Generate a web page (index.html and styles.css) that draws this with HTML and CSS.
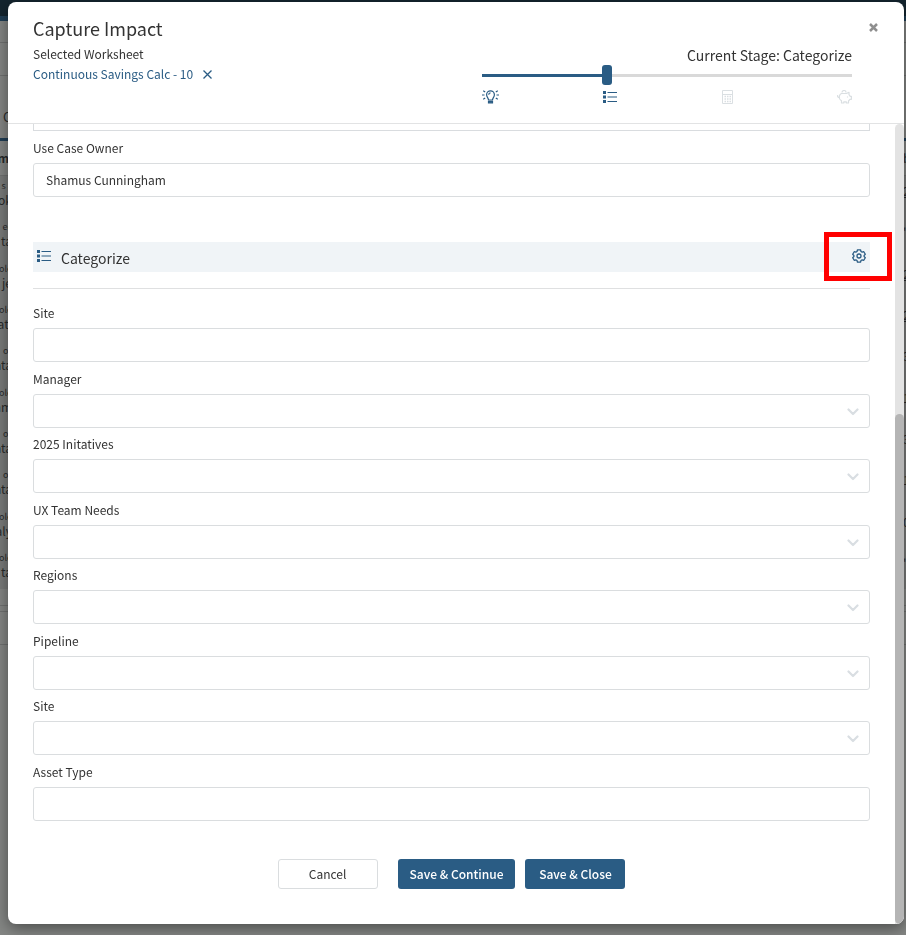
FILE: index.html
```html
<!DOCTYPE html>
<html lang="en">
<head>
<meta charset="utf-8">
<meta name="viewport" content="width=device-width, initial-scale=1">
<title>Capture Impact</title>
<link rel="stylesheet" href="styles.css">
</head>
<body>
<svg class="sprite" aria-hidden="true">
  <symbol id="list" viewBox="0 0 14 12">
    <path d="M0 0h3v3H0zM0 4.5h3v3H0zM0 9h3v3H0z" fill="currentColor"/>
    <path d="M4.5 1.5H14M4.5 6H14M4.5 10.5H14" stroke="currentColor" stroke-width="1.2"/>
  </symbol>
  <symbol id="chevron" viewBox="0 0 12 8">
    <path d="M1.5 1.5 6 6l4.500-4.500" fill="none" stroke="currentColor" stroke-width="2.200" stroke-linecap="round" stroke-linejoin="round"/>
  </symbol>
</svg>

<div class="page" aria-hidden="true">
  <div class="page-top"></div>
  <div class="page-bar"></div>
  <div class="page-tabs"><span>C</span></div>
  <div class="page-head"><b>me</b><span>b</span></div>
  <div class="page-rows">
    <div class="page-row"><p><small>s »</small>ok</p><u>2</u></div>
    <div class="page-row"><p><small>ec</small>ta</p><span>'</span></div>
    <div class="page-row"><p><small>ole</small>je</p><u>2</u></div>
    <div class="page-row"><p><small>ole</small>ati</p><u>2</u></div>
    <div class="page-row"><p><small>or</small>ata</p><span>3</span></div>
    <div class="page-row"><p><small>ole</small>am</p><span>1</span></div>
    <div class="page-row"><p><small>or</small>ata</p><span>3</span></div>
    <div class="page-row"><p><small>or</small>ata</p><span>1</span></div>
    <div class="page-row"><p><small>ole</small>aly</p><span>0</span></div>
    <div class="page-row"><p><small>ole</small>ta</p><span>'</span></div>
  </div>
  <div class="page-foot"></div>
</div>

<div class="overlay">
<section class="modal" role="dialog" aria-labelledby="title">
  <header class="modal-header">
    <div class="heading">
      <h1 id="title">Capture Impact</h1>
      <p>Selected Worksheet</p>
      <div class="worksheet">
        <a href="#">Continuous Savings Calc - 10</a>
        <button type="button" class="icon-button" aria-label="Remove worksheet">
          <svg width="9" height="9" viewBox="0 0 9 9"><path d="M.5.5l8 8M8.500.5l-8 8" stroke="currentColor" stroke-width="1.3"/></svg>
        </button>
      </div>
    </div>
    <div class="stage">
      <label for="stage">Current Stage: Categorize</label>
      <input id="stage" type="range" min="0" max="3" value="1">
      <div class="stage-icons">
        <svg width="17" height="14" viewBox="0 0 17 14" fill="none" stroke="currentColor" stroke-width="1.2">
          <path d="M6.500 10C6.500 8 4.600 7.200 4.600 4.700a3.900 3.900 0 0 1 7.800 0C12.400 7.200 10.500 8 10.500 10zM6.700 4.800c0-1 .8-1.900 1.800-1.900"/>
          <path d="M6.500 11.300h4v1.500h-4z" fill="currentColor"/>
          <path d="M0 5h2.500M14.500 5H17M1.200.8l2 1.200M15.800.8l-2 1.200M1.200 9.200l2-1.200M15.800 9.200l-2-1.200"/>
        </svg>
        <svg width="14" height="12"><use href="#list"/></svg>
        <svg class="pending" width="11" height="14" viewBox="0 0 11 14" fill="none" stroke="currentColor">
          <path d="M.5.5h10v13H.5zM.5 4.500h10"/>
          <path d="M2.500 6.500h1.500M5 6.500h1.500M7.500 6.500H9M2.500 9h1.500M5 9h1.500M7.500 9H9M2.500 11.500h1.500M5 11.500h1.500M7.500 11.500H9" stroke-width="1.4"/>
        </svg>
        <svg class="pending" width="15" height="14" viewBox="0 0 15 14" fill="none" stroke="currentColor" stroke-width="1.200" stroke-linejoin="round">
          <path d="M4.500 3.500h5L12 2.300v2.400l1.200 1.600h1.200v3h-1.500L11.500 11v2H9.300v-1.200H6.800V13H4.500v-2.200C2.500 9.500 2 7.500 2.400 6 2.800 4.500 3.500 3.900 4.500 3.500z"/>
          <path d="M5 2.500a2 2 0 0 1 4 0M2.400 7.500C.9 7.500.4 6.500.6 5.200M10.500 6.500v1"/>
        </svg>
      </div>
    </div>
    <button type="button" class="icon-button close" aria-label="Close">
      <svg width="9" height="9" viewBox="0 0 9 9"><path d="M1 1l7 7M8 1L1 8" stroke="currentColor" stroke-width="2.500"/></svg>
    </button>
  </header>

  <div class="modal-body">
    <form class="content">
      <div class="field-end"></div>
      <div class="field">
        <label for="owner">Use Case Owner</label>
        <input id="owner" type="text" value="Shamus Cunningham">
      </div>
      <div class="section-head">
        <div class="section-bar">
          <svg width="14" height="12"><use href="#list"/></svg>
          <h2>Categorize</h2>
          <button type="button" class="icon-button gear" aria-label="Configure categories">
            <svg width="14" height="14" viewBox="0 0 14 14" fill="none" stroke="currentColor" stroke-width="1.300" stroke-linejoin="round">
              <path d="M5.500.8h3l.5 1.700 1.100.6 1.700-.4 1.500 2.600L12.100 6.500v1l1.200 1.200-1.500 2.600-1.700-.4-1.100.6-.5 1.700h-3L5 11.500l-1.100-.6-1.700.4L.7 8.700l1.200-1.200v-1L.7 5.300l1.500-2.600 1.700.4L5 2.500z"/>
              <circle cx="7" cy="7" r="2"/>
            </svg>
          </button>
        </div>
      </div>
      <div class="fields">
        <div class="field"><label for="site">Site</label><input id="site" type="text"></div>
        <div class="field"><label for="manager">Manager</label><div class="picker"><select id="manager"><option></option></select><svg width="12" height="8"><use href="#chevron"/></svg></div></div>
        <div class="field"><label for="initiatives">2025 Initatives</label><div class="picker"><select id="initiatives"><option></option></select><svg width="12" height="8"><use href="#chevron"/></svg></div></div>
        <div class="field"><label for="ux">UX Team Needs</label><div class="picker"><select id="ux"><option></option></select><svg width="12" height="8"><use href="#chevron"/></svg></div></div>
        <div class="field"><label for="regions">Regions</label><div class="picker"><select id="regions"><option></option></select><svg width="12" height="8"><use href="#chevron"/></svg></div></div>
        <div class="field"><label for="pipeline">Pipeline</label><div class="picker"><select id="pipeline"><option></option></select><svg width="12" height="8"><use href="#chevron"/></svg></div></div>
        <div class="field"><label for="site-list">Site</label><div class="picker"><select id="site-list"><option></option></select><svg width="12" height="8"><use href="#chevron"/></svg></div></div>
        <div class="field"><label for="asset">Asset Type</label><input id="asset" type="text"></div>
      </div>
      <div class="actions">
        <button type="button" class="button cancel">Cancel</button>
        <button type="button" class="button">Save &amp; Continue</button>
        <button type="button" class="button">Save &amp; Close</button>
      </div>
    </form>
    <div class="rail"><div class="rail-thumb"></div></div>
  </div>
</section>
</div>
</body>
</html>
```

FILE: styles.css
```css
* { box-sizing: border-box; }

body {
  margin: 0;
  font-family: "Noto Sans CJK SC", "Noto Sans", sans-serif;
  font-size: 12px;
  line-height: 20px;
  color: #333;
}

h1, h2, p { margin: 0; font-weight: 400; }
button, input, select { font: inherit; color: inherit; }
a { color: #2a5c84; text-decoration: none; }
svg { display: block; flex: none; }
.sprite { position: absolute; width: 0; height: 0; }

/* Page under the dialog */
.page {
  height: 100vh;
  overflow: hidden;
  display: flex;
  flex-direction: column;
  background: #858785;
  color: #292b2c;
}
.page-top { height: 21px; flex: none; background: #14252f; border-bottom: 5px solid #203e55; }
.page-bar { height: 55px; flex: none; border-bottom: 1px solid #707271; background: linear-gradient(#707271, #707271) 0 21px / 100% 1px no-repeat; }
.page-tabs { height: 65px; flex: none; padding: 31px 0 0 3px; font-size: 13px; border-bottom: 3px solid #203e55; }
.page-head, .page-row { display: flex; justify-content: space-between; }
.page-head { height: 35px; flex: none; padding-top: 7px; border-bottom: 1px solid #707271; }
.page-head b, .page-row p {
  width: 12px;
  display: flex;
  flex-direction: column;
  align-items: flex-end;
  white-space: nowrap;
}
.page-head b { width: 16px; }
.page-head > :last-child, .page-row > :last-child { width: 3px; }
.page-rows {
  height: 413px;
  flex: none;
  display: flex;
  flex-direction: column;
  justify-content: space-between;
  background: #7a7c7b;
}
.page-row { height: 41px; padding-top: 4px; line-height: 15px; }
.page-row small { font-size: 9px; line-height: 12px; }
.page-row > :last-child { padding-top: 3px; }
.page-foot {
  height: 40px;
  flex: none;
  margin-top: 16px;
  border: solid #707271;
  border-width: 1px 0;
  background: linear-gradient(#707271, #707271) 0 5px / 100% 1px no-repeat;
}

/* Dialog */
.overlay {
  position: fixed;
  inset: 0;
  display: flex;
  padding: 2px 2px 11px 8px;
}
.modal {
  flex: 1;
  display: flex;
  flex-direction: column;
  overflow: hidden;
  background: #fff;
  border-radius: 8px;
  box-shadow: 0 4px 16px rgba(0, 0, 0, .45);
}
.modal-header {
  display: flex;
  align-items: flex-start;
  padding: 11px 26px 0 25px;
  height: 122px;
  flex: none;
  border-bottom: 1px solid #e2e3e4;
}
.heading { flex: 1; }
h1 { margin-bottom: 1px; font-size: 18px; line-height: 30px; }
.worksheet { display: flex; align-items: center; gap: 10px; }
.icon-button {
  padding: 0;
  border: 0;
  background: none;
  color: #2a5c84;
}
.close { margin: 10px 0 0 17px; color: #8f8f8f; }

.stage { width: 370px; padding-top: 32px; display: flex; flex-direction: column; color: #2a5c84; }
.stage label { align-self: flex-end; font-size: 14px; color: #333; }
.stage input {
  appearance: none;
  width: 100%;
  height: 20px;
  margin: 0 0 5px;
  background: linear-gradient(to right, #2a5c84 34%, #d9d9d9 34%) center / 100% 3px no-repeat;
}
.stage input::-webkit-slider-thumb {
  appearance: none;
  width: 10px;
  height: 20px;
  border-radius: 3px;
  background: #2a5c84;
}
.stage-icons { display: flex; justify-content: space-between; align-items: center; }
.pending { color: #dadfe2; }

.modal-body { flex: 1; min-height: 0; display: flex; }
.content {
  flex: 1;
  display: flex;
  flex-direction: column;
  padding: 0 25px 35px;
}
.field-end { height: 7px; margin-bottom: 7px; border: 1px solid #d9dcdf; border-top: 0; }
.field { display: flex; flex-direction: column; gap: 5px; }
.field input, .field select {
  width: 100%;
  height: 34px;
  padding: 0 12px 2px;
  border: 1px solid #dadddf;
  border-radius: 3px;
  background: #fff;
}
.field select { appearance: none; display: block; }
.picker { position: relative; color: #d9dee2; }
.picker svg { position: absolute; right: 11px; top: 14px; }

.section-head { margin-top: 45px; padding-bottom: 16px; border-bottom: 1px solid #dfe0e1; }
.section-bar {
  display: flex;
  align-items: center;
  gap: 10px;
  height: 30px;
  padding: 0 4px 2px;
  background: #f0f4f7;
  color: #2a5c84;
}
h2 { flex: 1; padding-top: 4px; font-size: 14px; color: #333; }
.gear { position: relative; }
.gear::after {
  content: "";
  position: absolute;
  inset: -17px -26px -18px -28px;
  border: 5px solid #f00;
}
.fields {
  flex: 1;
  display: flex;
  flex-direction: column;
  justify-content: space-between;
  margin: 14px 0 38px;
}
.actions { display: flex; justify-content: center; gap: 10px; }
.button {
  min-width: 100px;
  height: 30px;
  padding: 0 12px;
  border: 0;
  border-radius: 3px;
  background: #2a5c84;
  color: #fff;
  font-weight: 500;
}
.cancel { margin-right: 10px; border: 1px solid #dadddf; background: #fff; color: #333; font-weight: 400; }

.rail { width: 9px; display: grid; grid-template-rows: 29fr 51fr; background: #e3e3e3; border-radius: 5px 5px 0 0; }
.rail-thumb { grid-row: 2; background: #b5b5b5; border-radius: 5px; }
```
